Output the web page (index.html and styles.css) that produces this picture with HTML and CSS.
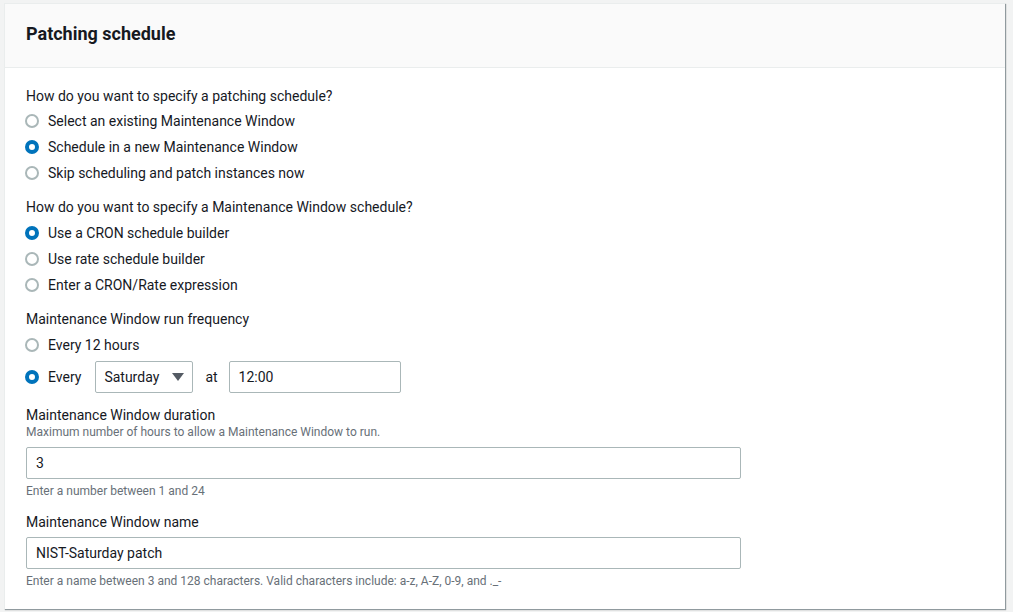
FILE: index.html
```html
<!DOCTYPE html>
<html>
<head>
<meta charset="utf-8">
<link rel="stylesheet" href="styles.css">
</head>
<body>
<div class="panel">
  <div class="panel-header"><h2>Patching schedule</h2></div>
  <div class="panel-body">
    <div class="group">
      <div class="question">How do you want to specify a patching schedule?</div>
      <div class="radio"><span class="dot"></span>Select an existing Maintenance Window</div>
      <div class="radio"><span class="dot on"></span>Schedule in a new Maintenance Window</div>
      <div class="radio"><span class="dot"></span>Skip scheduling and patch instances now</div>
    </div>
    <div class="group">
      <div class="question q2">How do you want to specify a Maintenance Window schedule?</div>
      <div class="radio"><span class="dot on"></span>Use a CRON schedule builder</div>
      <div class="radio"><span class="dot"></span>Use rate schedule builder</div>
      <div class="radio"><span class="dot"></span>Enter a CRON/Rate expression</div>
    </div>
    <div class="group g3">
      <div class="question q3">Maintenance Window run frequency</div>
      <div class="radio"><span class="dot"></span>Every 12 hours</div>
      <div class="radio every"><span class="dot on"></span>Every
        <div class="select">Saturday<svg width="12" height="8" viewBox="0 0 12 8"><path d="M0 0h12L6 8z" fill="#545b64"/></svg></div>
        <span class="at">at</span>
        <div class="input time">12:00</div>
      </div>
    </div>
    <div class="field">
      <div class="label">Maintenance Window duration</div>
      <div class="desc">Maximum number of hours to allow a Maintenance Window to run.</div>
      <div class="input wide">3</div>
      <div class="hint">Enter a number between 1 and 24</div>
    </div>
    <div class="field">
      <div class="label">Maintenance Window name</div>
      <div class="input wide">NIST-Saturday patch</div>
      <div class="hint">Enter a name between 3 and 128 characters. Valid characters include: a-z, A-Z, 0-9, and ._-</div>
    </div>
  </div>
</div>
</body>
</html>
```
FILE: styles.css
```css
html, body { margin: 0; padding: 0; }
body {
  background: #f2f3f3;
  font-family: Roboto, "Liberation Sans", sans-serif;
  font-size: 14px;
  color: #16191f;
  height: 612px;
  overflow: hidden;
}
.panel {
  margin: 3px 8px 0 4px;
  background: #fff;
  box-shadow: 1px 1px 1px 0 rgba(0,28,36,.3), 1px 1px 1px 0 rgba(0,28,36,.15);
  border-top: 1px solid #eaeded;
  border-left: 1px solid #eaeded;
  padding-bottom: 20px;
}
.panel-header {
  background: #fafafa;
  height: 63px;
  border-bottom: 1px solid #eaeded;
  padding: 0 21px;
  display: flex;
  align-items: center;
}
.panel-header h2 {
  margin: 0;
  font-size: 18px;
  font-weight: 700;
  line-height: 22px;
  position: relative;
  top: -2px;
}
.panel-body { padding: 18px 21px 0; }
.group { margin-bottom: 11px; }
.question { line-height: 20px; margin-bottom: 2px; }
.question.q2 { margin-bottom: 3px; }
.question.q3 { margin-top: 1px; margin-bottom: 3px; }
.radio {
  display: flex;
  align-items: center;
  height: 26px;
  line-height: 20px;
}
.dot {
  box-sizing: border-box;
  width: 14px; height: 14px;
  border-radius: 50%;
  border: 2px solid #aab7b8;
  margin: 0 8px 0 0;
  flex: none;
  position: relative;
  left: -1px;
}
.dot.on {
  border: 4px solid #0073bb;
}
.radio.every { height: 32px; margin-top: 3px; }
.select {
  box-sizing: border-box;
  margin-left: 14px;
  width: 98px;
  height: 32px;
  border: 1px solid #aab7b8;
  border-radius: 2px;
  display: flex;
  align-items: center;
  justify-content: space-between;
  padding: 0 8px 0 8px;
}
.at { margin: 0 11px 0 12px; }
.input {
  box-sizing: border-box;
  height: 32px;
  border: 1px solid #aab7b8;
  border-radius: 2px;
  display: flex;
  align-items: center;
  padding: 0 9px;
}
.input.time { width: 172px; }
.input.wide { width: 715px; }
.field { margin-top: 12px; }
.field + .field { margin-top: 13px; }
.label { line-height: 20px; }
.desc, .hint { font-size: 12px; color: #687078; line-height: 16px; }
.desc { margin-bottom: 7px; margin-top: -1px; }
.hint { margin-top: 4px; }
.field .label + .input { margin-top: 5px; }
```
